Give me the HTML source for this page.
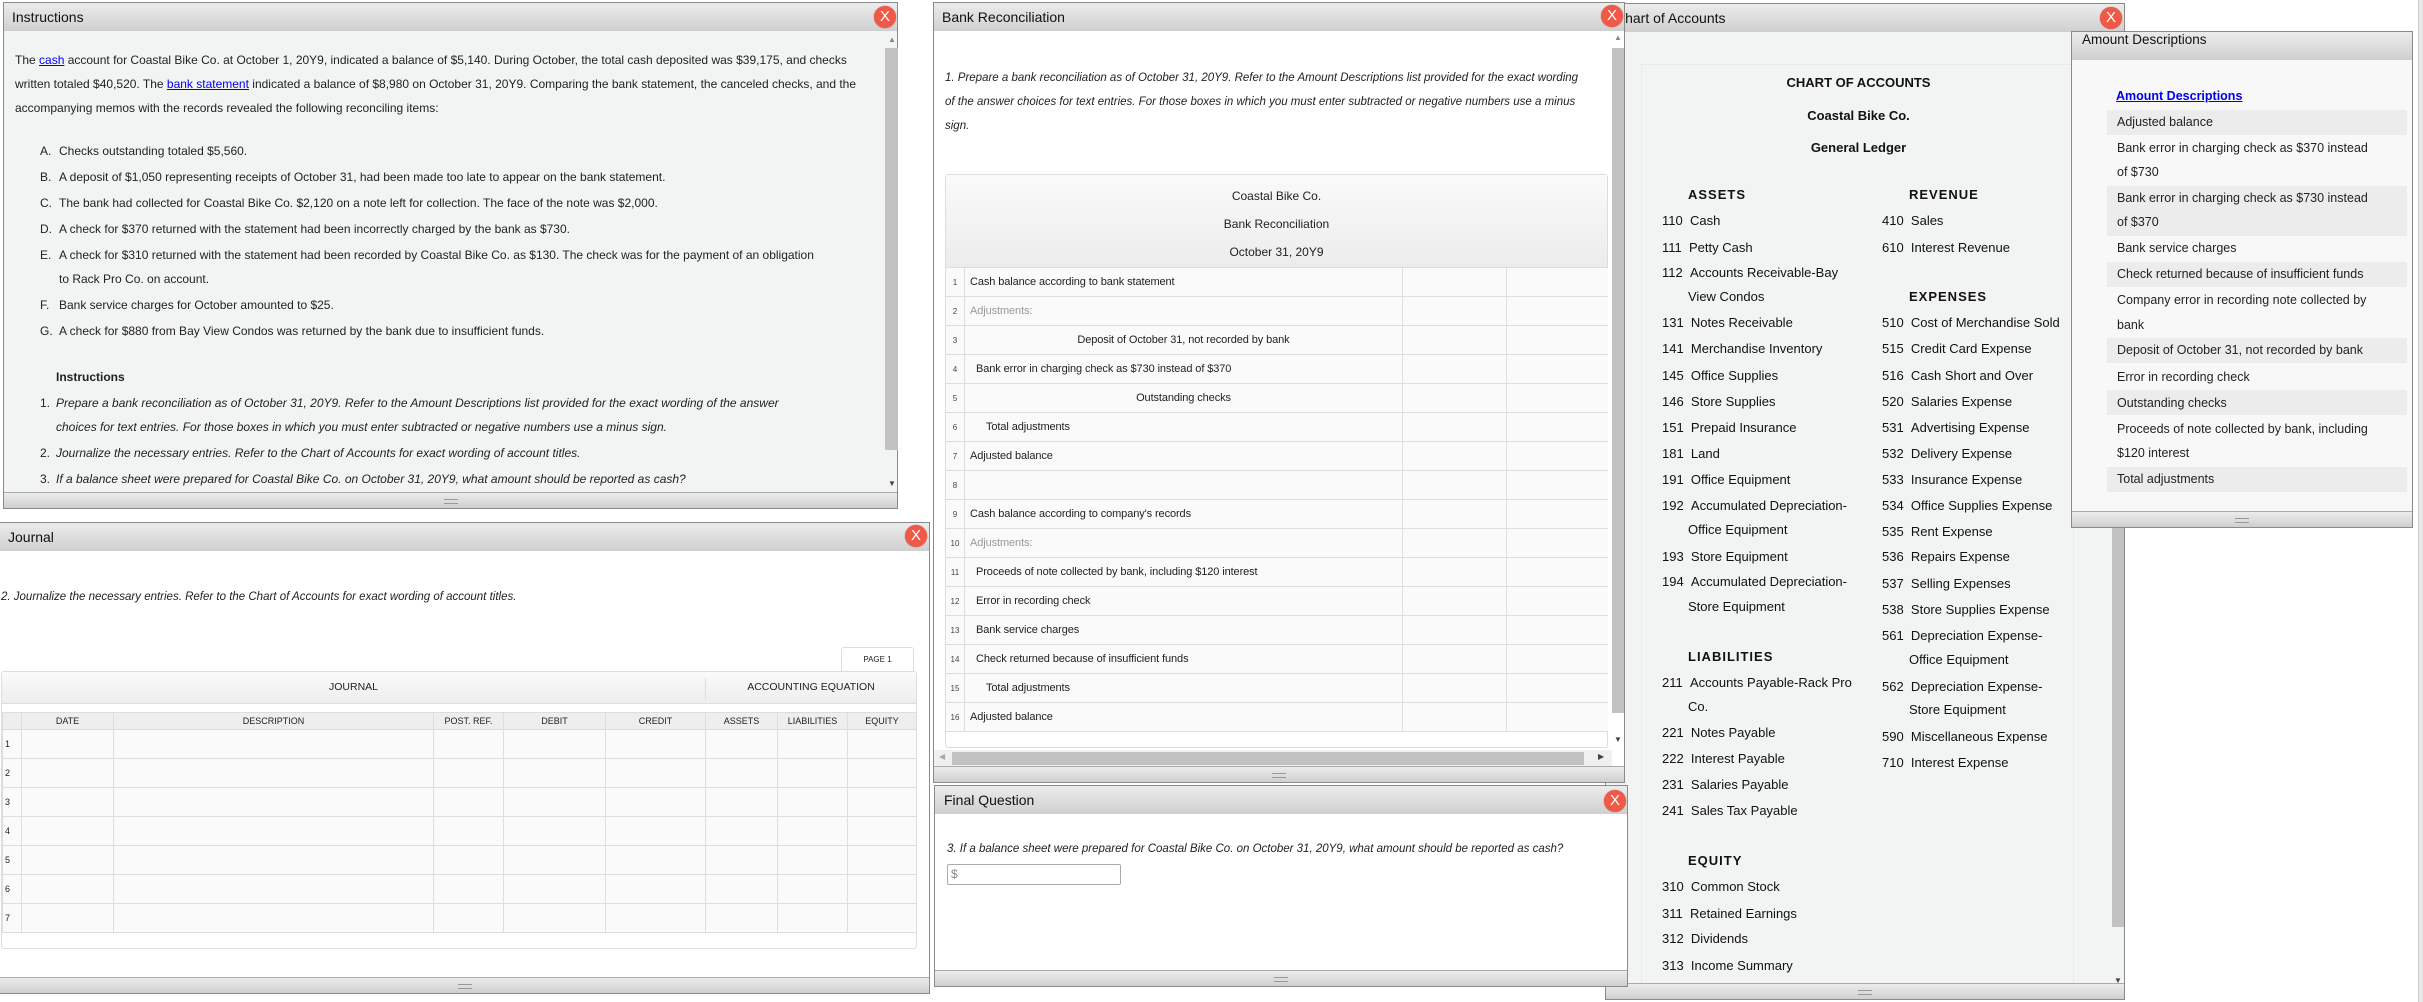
<!DOCTYPE html>
<html><head><meta charset="utf-8">
<style>
*{box-sizing:border-box;margin:0;padding:0}
body{width:2423px;height:1002px;background:#fff;position:relative;overflow:hidden;font-family:"Liberation Sans",Arial,sans-serif;color:#222}
.p{position:absolute;border:1px solid #8a8a8a;background:#fff}
.tb{position:absolute;left:0;right:0;top:0;height:28px;background:linear-gradient(#ececec,#cfcfcf);font-size:14px;line-height:28px;padding-left:8px;color:#111}
.x{position:absolute;width:22px;height:22px;border-radius:50%;background:#ee5a47;color:#fff;font-size:15px;line-height:22px;text-align:center;box-shadow:0 0 1px #a33}
.ft{position:absolute;left:0;right:0;bottom:0;height:16px;background:linear-gradient(#ececec,#cfcfcf);border-top:1px solid #aaa}
.ft:after{content:"";position:absolute;left:50%;top:6px;width:14px;height:3px;margin-left:-7px;border-top:1px solid #999;border-bottom:1px solid #999}
.a{position:absolute;white-space:nowrap}
.t{font-size:12px}
.i{font-style:italic}
a{color:#00e;text-decoration:underline}
.vs{position:absolute;background:#c2c2c2}
.jt td{border:1px solid #ddd;background:#fafafa;height:29px;font-size:9px;padding-left:2px}
.jt th{border:1px solid #ddd;background:#eee;font-weight:normal;font-size:9px;height:17px}
.br div.r{position:absolute;left:0;width:662px;height:29px;border-bottom:1px solid #ddd;background:#fafafa}
.br .n{position:absolute;left:0;width:19px;height:29px;border-right:1px solid #ddd;font-size:8px;color:#444;text-align:center;line-height:29px}
.br .c1{position:absolute;left:456px;top:0;width:1px;height:29px;background:#ddd}
.br .c2{position:absolute;left:560px;top:0;width:1px;height:29px;background:#ddd}
.br .tx{position:absolute;top:0;line-height:29px;font-size:11px;white-space:nowrap;letter-spacing:-0.1px}
.ch{font-size:13px;color:#111}
.ch div{position:absolute;white-space:nowrap;line-height:16px}
.ad div{position:absolute;white-space:nowrap;font-size:12.5px;line-height:16px}
.ad .s{background:#ececec;height:25px}
</style></head><body>

<!-- Instructions -->
<div class="p" style="left:3px;top:2px;width:895px;height:507px;background:#f2f3f3">
<div class="tb">Instructions</div>
<div class="x" style="left:870px;top:3px">X</div>
<div class="vs" style="left:881px;top:45px;width:13px;height:402px"></div>
<div class="a" style="left:884px;top:32px;font-size:8px;color:#888">▲</div>
<div class="a" style="left:884px;top:476px;font-size:8px;color:#444">▼</div>
<div class="a t" style="left:11px;top:50px">The <a>cash</a> account for Coastal Bike Co. at October 1, 20Y9, indicated a balance of $5,140. During October, the total cash deposited was $39,175, and checks</div>
<div class="a t" style="left:11px;top:74px">written totaled $40,520. The <a>bank statement</a> indicated a balance of $8,980 on October 31, 20Y9. Comparing the bank statement, the canceled checks, and the</div>
<div class="a t" style="left:11px;top:98px">accompanying memos with the records revealed the following reconciling items:</div>
<div class="a t" style="left:36px;top:141px">A.</div><div class="a t" style="left:55px;top:141px">Checks outstanding totaled $5,560.</div>
<div class="a t" style="left:36px;top:167px">B.</div><div class="a t" style="left:55px;top:167px">A deposit of $1,050 representing receipts of October 31, had been made too late to appear on the bank statement.</div>
<div class="a t" style="left:36px;top:193px">C.</div><div class="a t" style="left:55px;top:193px">The bank had collected for Coastal Bike Co. $2,120 on a note left for collection. The face of the note was $2,000.</div>
<div class="a t" style="left:36px;top:219px">D.</div><div class="a t" style="left:55px;top:219px">A check for $370 returned with the statement had been incorrectly charged by the bank as $730.</div>
<div class="a t" style="left:36px;top:245px">E.</div><div class="a t" style="left:55px;top:245px">A check for $310 returned with the statement had been recorded by Coastal Bike Co. as $130. The check was for the payment of an obligation</div>
<div class="a t" style="left:55px;top:269px">to Rack Pro Co. on account.</div>
<div class="a t" style="left:36px;top:295px">F.</div><div class="a t" style="left:55px;top:295px">Bank service charges for October amounted to $25.</div>
<div class="a t" style="left:36px;top:321px">G.</div><div class="a t" style="left:55px;top:321px">A check for $880 from Bay View Condos was returned by the bank due to insufficient funds.</div>
<div class="a t" style="left:52px;top:367px;font-weight:bold">Instructions</div>
<div class="a t" style="left:36px;top:393px">1.</div><div class="a t i" style="left:52px;top:393px">Prepare a bank reconciliation as of October 31, 20Y9. Refer to the Amount Descriptions list provided for the exact wording of the answer</div>
<div class="a t i" style="left:52px;top:417px">choices for text entries. For those boxes in which you must enter subtracted or negative numbers use a minus sign.</div>
<div class="a t" style="left:36px;top:443px">2.</div><div class="a t i" style="left:52px;top:443px">Journalize the necessary entries. Refer to the Chart of Accounts for exact wording of account titles.</div>
<div class="a t" style="left:36px;top:469px">3.</div><div class="a t i" style="left:52px;top:469px">If a balance sheet were prepared for Coastal Bike Co. on October 31, 20Y9, what amount should be reported as cash?</div>
<div class="ft"></div>
</div>

<!-- Journal -->
<div class="p" style="left:-1px;top:522px;width:931px;height:472px">
<div class="tb">Journal</div>
<div class="x" style="left:905px;top:2px">X</div>
<div class="a t i" style="left:1px;top:68px;font-size:11.5px">2. Journalize the necessary entries. Refer to the Chart of Accounts for exact wording of account titles.</div>
<div class="a" style="left:841px;top:124px;width:73px;height:25px;border:1px solid #ddd;border-bottom:none;border-radius:3px 3px 0 0;background:#fff;font-size:8px;text-align:center;line-height:24px">PAGE 1</div>
<div class="a" style="left:1px;top:148px;width:916px;height:278px;border:1px solid #ddd;border-radius:3px;background:#fff">
<div class="a" style="left:0;top:0;width:914px;height:32px;background:linear-gradient(#fafafa,#eee);border-bottom:1px solid #ddd">
<div class="a" style="left:0;width:703px;text-align:center;top:9px;font-size:10.5px">JOURNAL</div>
<div class="a" style="left:703px;top:6px;width:1px;height:22px;background:#ddd"></div>
<div class="a" style="left:704px;width:210px;text-align:center;top:9px;font-size:10.5px">ACCOUNTING EQUATION</div>
</div>
<table class="jt" style="position:absolute;left:0;top:40px;border-collapse:collapse;width:915px">
<tr><th style="width:19px"></th><th style="width:92px">DATE</th><th style="width:320px">DESCRIPTION</th><th style="width:70px">POST. REF.</th><th style="width:102px">DEBIT</th><th style="width:100px">CREDIT</th><th style="width:72px">ASSETS</th><th style="width:70px">LIABILITIES</th><th>EQUITY</th></tr>
<tr><td>1</td><td></td><td></td><td></td><td></td><td></td><td></td><td></td><td></td></tr>
<tr><td>2</td><td></td><td></td><td></td><td></td><td></td><td></td><td></td><td></td></tr>
<tr><td>3</td><td></td><td></td><td></td><td></td><td></td><td></td><td></td><td></td></tr>
<tr><td>4</td><td></td><td></td><td></td><td></td><td></td><td></td><td></td><td></td></tr>
<tr><td>5</td><td></td><td></td><td></td><td></td><td></td><td></td><td></td><td></td></tr>
<tr><td>6</td><td></td><td></td><td></td><td></td><td></td><td></td><td></td><td></td></tr>
<tr><td>7</td><td></td><td></td><td></td><td></td><td></td><td></td><td></td><td></td></tr>
</table>
</div>
<div class="ft"></div>
</div>

<!-- Chart of Accounts -->
<div class="p" style="left:1605px;top:3px;width:520px;height:997px;background:#f2f3f3">
<div class="tb" style="padding-left:9px">Chart of Accounts</div>
<div class="x" style="left:494px;top:3px">X</div>
<div class="vs" style="left:506px;top:47px;width:12px;height:876px"></div>
<div class="a" style="left:508px;top:972px;font-size:8px;color:#444">▼</div>
<div class="a" style="left:35px;top:60px;width:433px;height:920px;border:1px solid #e8eaea"></div>
<div class="ch">
<div style="left:0;width:505px;text-align:center;top:71px;font-weight:bold">CHART OF ACCOUNTS</div>
<div style="left:0;width:505px;text-align:center;top:104px;font-weight:bold">Coastal Bike Co.</div>
<div style="left:0;width:505px;text-align:center;top:136px;font-weight:bold">General Ledger</div>
<div style="left:82px;top:183px;font-weight:bold;letter-spacing:1px">ASSETS</div>
<div style="left:56px;top:209px">110&nbsp;&nbsp;Cash</div>
<div style="left:56px;top:236px">111&nbsp;&nbsp;Petty Cash</div>
<div style="left:56px;top:261px">112&nbsp;&nbsp;Accounts Receivable-Bay</div>
<div style="left:82px;top:285px">View Condos</div>
<div style="left:56px;top:311px">131&nbsp;&nbsp;Notes Receivable</div>
<div style="left:56px;top:337px">141&nbsp;&nbsp;Merchandise Inventory</div>
<div style="left:56px;top:364px">145&nbsp;&nbsp;Office Supplies</div>
<div style="left:56px;top:390px">146&nbsp;&nbsp;Store Supplies</div>
<div style="left:56px;top:416px">151&nbsp;&nbsp;Prepaid Insurance</div>
<div style="left:56px;top:442px">181&nbsp;&nbsp;Land</div>
<div style="left:56px;top:468px">191&nbsp;&nbsp;Office Equipment</div>
<div style="left:56px;top:494px">192&nbsp;&nbsp;Accumulated Depreciation-</div>
<div style="left:82px;top:518px">Office Equipment</div>
<div style="left:56px;top:545px">193&nbsp;&nbsp;Store Equipment</div>
<div style="left:56px;top:570px">194&nbsp;&nbsp;Accumulated Depreciation-</div>
<div style="left:82px;top:595px">Store Equipment</div>
<div style="left:82px;top:645px;font-weight:bold;letter-spacing:1px">LIABILITIES</div>
<div style="left:56px;top:671px">211&nbsp;&nbsp;Accounts Payable-Rack Pro</div>
<div style="left:82px;top:695px">Co.</div>
<div style="left:56px;top:721px">221&nbsp;&nbsp;Notes Payable</div>
<div style="left:56px;top:747px">222&nbsp;&nbsp;Interest Payable</div>
<div style="left:56px;top:773px">231&nbsp;&nbsp;Salaries Payable</div>
<div style="left:56px;top:799px">241&nbsp;&nbsp;Sales Tax Payable</div>
<div style="left:82px;top:849px;font-weight:bold;letter-spacing:1px">EQUITY</div>
<div style="left:56px;top:875px">310&nbsp;&nbsp;Common Stock</div>
<div style="left:56px;top:902px">311&nbsp;&nbsp;Retained Earnings</div>
<div style="left:56px;top:927px">312&nbsp;&nbsp;Dividends</div>
<div style="left:56px;top:954px">313&nbsp;&nbsp;Income Summary</div>
<div style="left:303px;top:183px;font-weight:bold;letter-spacing:1px">REVENUE</div>
<div style="left:276px;top:209px">410&nbsp;&nbsp;Sales</div>
<div style="left:276px;top:236px">610&nbsp;&nbsp;Interest Revenue</div>
<div style="left:303px;top:285px;font-weight:bold;letter-spacing:1px">EXPENSES</div>
<div style="left:276px;top:311px">510&nbsp;&nbsp;Cost of Merchandise Sold</div>
<div style="left:276px;top:337px">515&nbsp;&nbsp;Credit Card Expense</div>
<div style="left:276px;top:364px">516&nbsp;&nbsp;Cash Short and Over</div>
<div style="left:276px;top:390px">520&nbsp;&nbsp;Salaries Expense</div>
<div style="left:276px;top:416px">531&nbsp;&nbsp;Advertising Expense</div>
<div style="left:276px;top:442px">532&nbsp;&nbsp;Delivery Expense</div>
<div style="left:276px;top:468px">533&nbsp;&nbsp;Insurance Expense</div>
<div style="left:276px;top:494px">534&nbsp;&nbsp;Office Supplies Expense</div>
<div style="left:276px;top:520px">535&nbsp;&nbsp;Rent Expense</div>
<div style="left:276px;top:545px">536&nbsp;&nbsp;Repairs Expense</div>
<div style="left:276px;top:572px">537&nbsp;&nbsp;Selling Expenses</div>
<div style="left:276px;top:598px">538&nbsp;&nbsp;Store Supplies Expense</div>
<div style="left:276px;top:624px">561&nbsp;&nbsp;Depreciation Expense-</div>
<div style="left:303px;top:648px">Office Equipment</div>
<div style="left:276px;top:675px">562&nbsp;&nbsp;Depreciation Expense-</div>
<div style="left:303px;top:698px">Store Equipment</div>
<div style="left:276px;top:725px">590&nbsp;&nbsp;Miscellaneous Expense</div>
<div style="left:276px;top:751px">710&nbsp;&nbsp;Interest Expense</div>
</div>
<div class="ft"></div>
</div>

<!-- Bank Reconciliation -->
<div class="p br" style="left:933px;top:2px;width:692px;height:781px">
<div class="tb">Bank Reconciliation</div>
<div class="x" style="left:667px;top:2px">X</div>
<div class="vs" style="left:678px;top:45px;width:12px;height:665px"></div>
<div class="a" style="left:680px;top:30px;font-size:8px;color:#888">▲</div>
<div class="a" style="left:680px;top:732px;font-size:8px;color:#444">▼</div>
<div class="a i" style="left:11px;top:69px;font-size:11.5px">1. Prepare a bank reconciliation as of October 31, 20Y9. Refer to the Amount Descriptions list provided for the exact wording</div>
<div class="a i" style="left:11px;top:93px;font-size:11.5px">of the answer choices for text entries. For those boxes in which you must enter subtracted or negative numbers use a minus</div>
<div class="a i" style="left:11px;top:117px;font-size:11.5px">sign.</div>
<div class="a" style="left:11px;top:171px;width:663px;height:574px;border:1px solid #ddd;border-radius:3px;background:#fff">
<div class="a" style="left:0;top:0;width:661px;height:93px;background:linear-gradient(#fafafa,#ececec);border-bottom:1px solid #ddd;font-size:12px;text-align:center">
<div class="a" style="left:0;width:661px;top:14px">Coastal Bike Co.</div>
<div class="a" style="left:0;width:661px;top:42px">Bank Reconciliation</div>
<div class="a" style="left:0;width:661px;top:70px">October 31, 20Y9</div>
</div>
<div class="r" style="top:93px"><div class="n">1</div><div class="tx" style="left:24px">Cash balance according to bank statement</div><div class="c1"></div><div class="c2"></div></div>
<div class="r" style="top:122px"><div class="n">2</div><div class="tx" style="left:24px;color:#999">Adjustments:</div><div class="c1"></div><div class="c2"></div></div>
<div class="r" style="top:151px"><div class="n">3</div><div class="tx" style="left:19px;width:437px;text-align:center">Deposit of October 31, not recorded by bank</div><div class="c1"></div><div class="c2"></div></div>
<div class="r" style="top:180px"><div class="n">4</div><div class="tx" style="left:30px">Bank error in charging check as $730 instead of $370</div><div class="c1"></div><div class="c2"></div></div>
<div class="r" style="top:209px"><div class="n">5</div><div class="tx" style="left:19px;width:437px;text-align:center">Outstanding checks</div><div class="c1"></div><div class="c2"></div></div>
<div class="r" style="top:238px"><div class="n">6</div><div class="tx" style="left:40px">Total adjustments</div><div class="c1"></div><div class="c2"></div></div>
<div class="r" style="top:267px"><div class="n">7</div><div class="tx" style="left:24px">Adjusted balance</div><div class="c1"></div><div class="c2"></div></div>
<div class="r" style="top:296px"><div class="n">8</div><div class="c1"></div><div class="c2"></div></div>
<div class="r" style="top:325px"><div class="n">9</div><div class="tx" style="left:24px">Cash balance according to company's records</div><div class="c1"></div><div class="c2"></div></div>
<div class="r" style="top:354px"><div class="n">10</div><div class="tx" style="left:24px;color:#999">Adjustments:</div><div class="c1"></div><div class="c2"></div></div>
<div class="r" style="top:383px"><div class="n">11</div><div class="tx" style="left:30px">Proceeds of note collected by bank, including $120 interest</div><div class="c1"></div><div class="c2"></div></div>
<div class="r" style="top:412px"><div class="n">12</div><div class="tx" style="left:30px">Error in recording check</div><div class="c1"></div><div class="c2"></div></div>
<div class="r" style="top:441px"><div class="n">13</div><div class="tx" style="left:30px">Bank service charges</div><div class="c1"></div><div class="c2"></div></div>
<div class="r" style="top:470px"><div class="n">14</div><div class="tx" style="left:30px">Check returned because of insufficient funds</div><div class="c1"></div><div class="c2"></div></div>
<div class="r" style="top:499px"><div class="n">15</div><div class="tx" style="left:40px">Total adjustments</div><div class="c1"></div><div class="c2"></div></div>
<div class="r" style="top:528px"><div class="n">16</div><div class="tx" style="left:24px">Adjusted balance</div><div class="c1"></div><div class="c2"></div></div>
</div>
<div class="a" style="left:0;top:747px;width:678px;height:16px;background:#f0f0f0"></div>
<div class="vs" style="left:18px;top:749px;width:632px;height:13px"></div>
<div class="a" style="left:5px;top:749px;font-size:8px;color:#aaa">◀</div>
<div class="a" style="left:664px;top:749px;font-size:8px;color:#444">▶</div>
<div class="ft"></div>
</div>

<!-- Final Question -->
<div class="p" style="left:934px;top:785px;width:694px;height:202px">
<div class="tb" style="padding-left:9px">Final Question</div>
<div class="x" style="left:669px;top:4px">X</div>
<div class="a i" style="left:12px;top:57px;font-size:11.5px">3. If a balance sheet were prepared for Coastal Bike Co. on October 31, 20Y9, what amount should be reported as cash?</div>
<div class="a" style="left:12px;top:78px;width:174px;height:21px;border:1px solid #aaa;border-radius:2px;font-size:12px;color:#888;padding-left:3px;line-height:19px">$</div>
<div class="ft"></div>
</div>

<!-- Amount Descriptions -->
<div class="p ad" style="left:2071px;top:31px;width:342px;height:497px;background:#f8f8f8">
<div class="tb" style="padding-left:10px;font-size:13.5px">Amount Descriptions</div>
<div style="left:44px;top:56px;font-weight:bold"><a>Amount Descriptions</a></div>
<div class="s" style="left:35px;top:78px;width:300px"></div>
<div class="s" style="left:35px;top:154px;width:300px;height:50px"></div>
<div class="s" style="left:35px;top:230px;width:300px"></div>
<div class="s" style="left:35px;top:306px;width:300px"></div>
<div class="s" style="left:35px;top:358px;width:300px"></div>
<div class="s" style="left:35px;top:435px;width:300px"></div>
<div style="left:45px;top:82px">Adjusted balance</div>
<div style="left:45px;top:108px">Bank error in charging check as $370 instead</div>
<div style="left:45px;top:132px">of $730</div>
<div style="left:45px;top:158px">Bank error in charging check as $730 instead</div>
<div style="left:45px;top:182px">of $370</div>
<div style="left:45px;top:208px">Bank service charges</div>
<div style="left:45px;top:234px">Check returned because of insufficient funds</div>
<div style="left:45px;top:260px">Company error in recording note collected by</div>
<div style="left:45px;top:285px">bank</div>
<div style="left:45px;top:310px">Deposit of October 31, not recorded by bank</div>
<div style="left:45px;top:337px">Error in recording check</div>
<div style="left:45px;top:363px">Outstanding checks</div>
<div style="left:45px;top:389px">Proceeds of note collected by bank, including</div>
<div style="left:45px;top:413px">$120 interest</div>
<div style="left:45px;top:439px">Total adjustments</div>
<div class="ft"></div>
</div>

<div class="a" style="left:2418px;top:0;width:5px;height:1002px;background:#e8e8e8;border-left:1px solid #ccc"></div>
</body></html>
